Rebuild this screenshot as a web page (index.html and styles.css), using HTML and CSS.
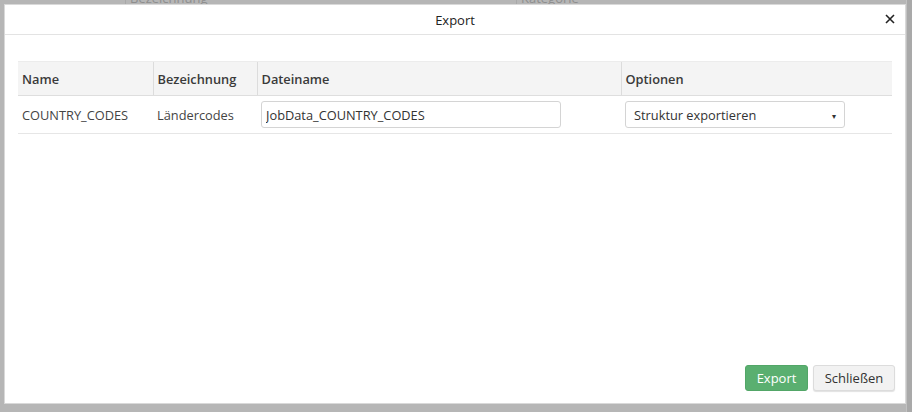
FILE: index.html
```html
<!DOCTYPE html>
<html lang="de">
<head>
<meta charset="utf-8">
<title>Export</title>
<link rel="stylesheet" href="styles.css">
</head>
<body>
<div class="page">
  <div class="bg-head">
    <div class="bg-col bg-c1"></div>
    <div class="bg-col bg-c2">Bezeichnung</div>
    <div class="bg-col bg-c3">Kategorie</div>
  </div>
  <div class="bg-scroll"></div>
</div>
<div class="overlay">
  <div class="dialog">
    <div class="dlg-head">
      <span class="dlg-title">Export</span>
      <span class="dlg-close">
        <svg width="10" height="10" viewBox="0 0 10 10"><path d="M1 1 L9 9 M9 1 L1 9" stroke="#222" stroke-width="1.6" fill="none"/></svg>
      </span>
    </div>
    <div class="dlg-body">
      <table class="grid">
        <thead>
          <tr>
            <th class="c-name">Name</th>
            <th class="c-bez">Bezeichnung</th>
            <th class="c-file">Dateiname</th>
            <th class="c-opt">Optionen</th>
          </tr>
        </thead>
        <tbody>
          <tr>
            <td>COUNTRY_CODES</td>
            <td>Ländercodes</td>
            <td><input class="txt" type="text" value="JobData_COUNTRY_CODES"></td>
            <td><div class="sel"><span>Struktur exportieren</span><span class="caret">▾</span></div></td>
          </tr>
        </tbody>
      </table>
    </div>
    <div class="dlg-foot">
      <button class="btn btn-primary">Export</button>
      <button class="btn btn-default">Schließen</button>
    </div>
  </div>
</div>
</body>
</html>
```
FILE: styles.css
```css
html, body {
  margin: 0;
  padding: 0;
}
body {
  width: 912px;
  height: 412px;
  overflow: hidden;
  background: #b6b6b6;
  font-family: "Open Sans", "Noto Sans", sans-serif;
  font-size: 12.8px;
  color: #333;
}
.page {
  height: 412px;
  display: flex;
}
.bg-head {
  display: flex;
  height: 20px;
  margin-top: -12px;
  flex: 1;
}
.bg-col {
  color: #8e8e8e;
  font-size: 13px;
  line-height: 20px;
  padding-left: 4px;
  border-left: 1px solid #a8a8a8;
}
.bg-c1 { width: 121px; border-left: none; }
.bg-c2 { width: 386px; }
.bg-c3 { flex: 1; }
.bg-scroll {
  width: 5px;
  background: #a9a9a9;
  border-left: 1px solid #c2c2c2;
}
.overlay {
  position: fixed;
  left: 0;
  top: 0;
  width: 912px;
  height: 412px;
  padding: 4px 0 0 4px;
  box-sizing: border-box;
}
.dialog {
  width: 902px;
  height: 400px;
  box-sizing: border-box;
  background: #fff;
  border: 1px solid #d9d9d9;
  display: flex;
  flex-direction: column;
}
.dlg-head {
  height: 29px;
  border-bottom: 1px solid #e3e3e3;
  display: flex;
  align-items: center;
  justify-content: center;
  position: relative;
}
.dlg-title {
  color: #222;
  font-size: 13px;
}
.dlg-close {
  position: absolute;
  right: 10px;
  top: 9px;
  width: 10px;
  height: 10px;
  display: flex;
}
.dlg-body {
  padding: 26px 13px 0 13px;
}
.grid {
  width: 874px;
  border-collapse: collapse;
  table-layout: fixed;
}
.grid th {
  background: #f4f4f4;
  font-weight: 600;
  color: #3a3a3a;
  text-align: left;
  height: 34px;
  padding: 0 4px;
  border-top: 1px solid #ececec;
  border-bottom: 1px solid #dedede;
  border-left: 1px solid #dcdcdc;
  box-sizing: border-box;
}
.grid th:first-child { border-left: none; }
.c-name { width: 135px; }
.c-bez { width: 104px; }
.c-file { width: 364px; }
.c-opt { width: 271px; }
.grid td {
  height: 38px;
  padding: 0 4px;
  border-bottom: 1px solid #e6e6e6;
  color: #444;
  box-sizing: border-box;
  white-space: nowrap;
}
.txt {
  display: block;
  width: 300px;
  height: 27px;
  box-sizing: border-box;
  border: 1px solid #d4d4d4;
  border-radius: 3px;
  padding: 1px 4px 0 4px;
  font-family: inherit;
  font-size: 12.8px;
  color: #333;
  outline: none;
  margin-top: 0;
}
.sel {
  width: 220px;
  height: 27px;
  box-sizing: border-box;
  border: 1px solid #d4d4d4;
  border-radius: 3px;
  padding: 1px 8px 0 8px;
  display: flex;
  align-items: center;
  justify-content: space-between;
  color: #333;
  margin-top: 0;
}
.caret {
  font-size: 8px;
  color: #333;
}
.dlg-foot {
  margin-top: auto;
  display: flex;
  justify-content: flex-end;
  gap: 5px;
  padding: 0 10px 12px 0;
}
.btn {
  height: 26px;
  border-radius: 3px;
  font-family: inherit;
  font-size: 13px;
  padding: 0;
  cursor: pointer;
}
.btn-primary {
  width: 63px;
  background: #5aaf70;
  color: #fff;
  border: 1px solid #52a667;
}
.btn-default {
  width: 82px;
  background: #f2f2f2;
  color: #333;
  border: 1px solid #dcdcdc;
  box-shadow: 0 1px 1px rgba(0,0,0,0.12);
}
```
